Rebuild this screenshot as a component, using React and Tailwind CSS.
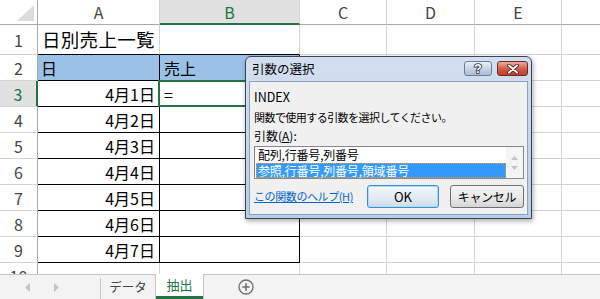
import React from "react";

const rows = [
  { n: 1, a: "日別売上一覧", title: true },
  { n: 2, a: "日", b: "売上", head: true },
  { n: 3, a: "4月1日", b: "=", sel: true },
  { n: 4, a: "4月2日" },
  { n: 5, a: "4月3日" },
  { n: 6, a: "4月4日" },
  { n: 7, a: "4月5日" },
  { n: 8, a: "4月6日" },
  { n: 9, a: "4月7日" },
  { n: 10 },
];

function RowHeader({ n, sel }) {
  return (
    <div
      className={
        sel
          ? "w-[38px] shrink-0 border-b border-b-[#d4d4d4] border-r-2 border-r-[#217346] bg-[#e1e1e1] text-[#217346] flex items-center justify-center text-[16px]"
          : "w-[38px] shrink-0 border-b border-b-[#d4d4d4] border-r border-r-[#ababab] text-[#444] flex items-center justify-center text-[16px]"
      }
    >
      {n}
    </div>
  );
}

function Row({ r }) {
  const inTable = r.n >= 2 && r.n <= 9;
  const h = r.title ? "h-[30px]" : "h-[26px]";
  let aCls = "w-[122px] shrink-0 border-r border-b flex items-center ";
  let bCls = "w-[140px] shrink-0 border-r border-b flex items-center relative ";
  if (r.n === 1) {
    aCls += "border-r-[#d4d4d4] border-b-black pl-[4px] text-[18.5px] tracking-[0.3px]";
    bCls += "border-r-[#d4d4d4] border-b-black";
  } else if (inTable) {
    aCls += "border-r-black border-b-black text-[16px] ";
    bCls += "border-r-black border-b-black text-[16px] pl-[4px] ";
    if (r.head) {
      aCls += "bg-[#9bc2e6] pl-[3px]";
      bCls += "bg-[#9bc2e6]";
    } else {
      aCls += "justify-end pr-[4px]";
    }
  } else {
    aCls += "border-r-[#d4d4d4] border-b-[#d4d4d4]";
    bCls += "border-r-[#d4d4d4] border-b-[#d4d4d4]";
  }
  return (
    <div className={"flex shrink-0 " + h}>
      <RowHeader n={r.n} sel={r.sel} />
      <div className={aCls}>{r.a}</div>
      <div className={bCls}>
        {r.b}
        {r.sel && (
          <div className="absolute -left-[2px] -top-[1px] w-[141px] h-[27px] border-2 border-[#217346]" />
        )}
      </div>
      <div className="w-[87px] shrink-0 border-r border-b border-[#d4d4d4]" />
      <div className="w-[88px] shrink-0 border-r border-b border-[#d4d4d4]" />
      <div className="w-[87px] shrink-0 border-r border-b border-[#d4d4d4]" />
      <div className="flex-1 border-b border-[#d4d4d4]" />
    </div>
  );
}

function Dialog() {
  return (
    <div className="absolute left-[245px] top-[56px] w-[287px] h-[163px] rounded-t-[6px] border border-[#3a4656] bg-gradient-to-b from-[#d3dff0] to-[#b8cde6] flex flex-col px-[3px] pb-[3px] shadow-[1px_2px_5px_rgba(0,0,0,0.35)]">
      <div className="h-[24px] shrink-0 flex items-start justify-between">
        <div className="pl-[3px] pt-[4px] text-[12.5px] leading-[16px] text-black">引数の選択</div>
        <div className="flex gap-[5px] pt-[4px]">
          <div className="w-[28px] h-[15px] rounded-[3px] border border-[#6f7e92] bg-gradient-to-b from-[#e8eef6] to-[#a9bcd4] flex items-center justify-center">
            <svg width="12" height="13" viewBox="0 0 12 13">
              <text x="6" y="11" textAnchor="middle" fontSize="13" fontWeight="700" fontFamily="Liberation Sans, sans-serif" fill="#fff" stroke="#2a3340" strokeWidth="1.6" paintOrder="stroke">?</text>
            </svg>
          </div>
          <div className="w-[31px] h-[15px] rounded-[3px] border border-[#6b2a24] bg-gradient-to-b from-[#eab0a3] via-[#d45c48] to-[#c0402c] flex items-center justify-center">
            <svg width="14" height="10" viewBox="0 0 14 10">
              <path d="M3 1.5 L11 8.5 M11 1.5 L3 8.5" stroke="#3a1a16" strokeWidth="3.6" strokeLinecap="round" />
              <path d="M3 1.5 L11 8.5 M11 1.5 L3 8.5" stroke="#fff" strokeWidth="2" strokeLinecap="round" />
            </svg>
          </div>
        </div>
      </div>
      <div className="flex-1 bg-[#f0f0f0] border border-[#8ea2bb] pl-[4px] pr-[3px] pt-[7px] flex flex-col text-black">
        <div className="h-[16px] leading-[16px] text-[12.5px]">INDEX</div>
        <div className="mt-[4px] h-[16px] leading-[16px] text-[11px] tracking-[-0.55px] whitespace-nowrap">関数で使用する引数を選択してください。</div>
        <div className="mt-[3px] h-[16px] leading-[16px] text-[12px]">
          引数(<span className="underline">A</span>):
        </div>
        <div className="mt-[2px] h-[33px] border border-[#828790] bg-white flex">
          <div className="flex-1 flex flex-col pt-[0px] pl-[1px]">
            <div className="h-[16px] leading-[16px] text-[12px] pl-[2px] tracking-[-0.2px] whitespace-nowrap">配列,行番号,列番号</div>
            <div className="h-[15px] leading-[14px] text-[12px] pl-[1px] tracking-[-0.2px] bg-[#3399ff] text-white border border-dotted border-[#f59a3a] whitespace-nowrap">参照,行番号,列番号,領域番号</div>
          </div>
          <div className="w-[17px] shrink-0 bg-[#f4f4f4] flex flex-col items-center justify-center gap-[6px]">
            <svg width="7" height="4" viewBox="0 0 7 4"><path d="M0 4 L3.5 0 L7 4 Z" fill="#c2c2c2" /></svg>
            <svg width="7" height="4" viewBox="0 0 7 4"><path d="M0 0 L3.5 4 L7 0 Z" fill="#c2c2c2" /></svg>
          </div>
        </div>
        <div className="mt-[6px] h-[23px] flex items-center">
          <div className="text-[11px] tracking-[-0.4px] text-[#0066cc] underline whitespace-nowrap">この関数のヘルプ(H)</div>
          <div className="flex-1" />
          <div className="w-[72px] h-[23px] rounded-[3px] border border-[#3c8fd4] bg-gradient-to-b from-[#f2f7fb] via-[#e3ecf3] to-[#cfdde8] shadow-[inset_0_0_0_1px_#a8dcfa] flex items-center justify-center text-[13px]">
            OK
          </div>
          <div className="ml-[11px] w-[74px] h-[23px] rounded-[3px] border border-[#707070] bg-gradient-to-b from-[#f2f2f2] via-[#ebebeb] to-[#d5d5d5] flex items-center justify-center text-[12px] tracking-[-0.3px]">
            キャンセル
          </div>
        </div>
      </div>
    </div>
  );
}

function TabBar() {
  return (
    <div className="h-[25px] shrink-0 border-t border-[#c6c6c6] bg-[#f3f3f3] flex text-[13px]">
      <div className="w-[100px] shrink-0 relative">
        <svg className="absolute left-[25px] top-[8px]" width="6" height="9" viewBox="0 0 6 9"><path d="M5 0 L0 4.5 L5 9 Z" fill="#c3c3c3" /></svg>
        <svg className="absolute left-[54px] top-[8px]" width="6" height="9" viewBox="0 0 6 9"><path d="M0 0 L5 4.5 L0 9 Z" fill="#c3c3c3" /></svg>
      </div>
      <div className="w-[55px] shrink-0 flex flex-col">
        <div className="flex-1 flex items-center justify-center border-l border-[#c6c6c6] mt-[3px] text-[#444] text-[12.5px] pb-[3px]">データ</div>
      </div>
      <div className="w-[49px] shrink-0 bg-white border-x border-[#c6c6c6] flex flex-col -mt-px">
        <div className="flex-1 flex items-center justify-center text-[#217346] text-[13px]">抽出</div>
        <div className="h-[3px] bg-[#217346]" />
      </div>
      <div className="flex-1 relative">
        <svg className="absolute left-[34px] top-[4px]" width="16" height="16" viewBox="0 0 16 16">
          <circle cx="8" cy="8" r="7" fill="none" stroke="#6f6f6f" strokeWidth="1.3" />
          <path d="M8 4.3 V11.7 M4.3 8 H11.7" stroke="#6f6f6f" strokeWidth="1.6" />
        </svg>
      </div>
    </div>
  );
}

export default function App() {
  return (
    <div className="w-[600px] h-[299px] relative overflow-hidden bg-white flex flex-col font-['Noto_Sans_CJK_JP','Noto_Sans',sans-serif] text-black">
      <div className="h-[274px] overflow-hidden flex flex-col">
        <div className="flex h-[25px] shrink-0 text-[16px] text-[#444]">
          <div className="w-[38px] shrink-0 border-r border-b border-[#ababab] relative">
            <svg className="absolute right-[3px] bottom-[3px]" width="17" height="16" viewBox="0 0 17 16">
              <path d="M17 0 L17 16 L0 16 Z" fill="#dcdcdc" />
            </svg>
          </div>
          <div className="w-[122px] shrink-0 border-r border-r-[#d4d4d4] border-b border-b-[#ababab] flex items-center justify-center">A</div>
          <div className="w-[140px] shrink-0 border-r border-r-[#d4d4d4] border-b-2 border-b-[#217346] bg-[#e1e1e1] text-[#217346] flex items-center justify-center">B</div>
          <div className="w-[87px] shrink-0 border-r border-r-[#d4d4d4] border-b border-b-[#ababab] flex items-center justify-center">C</div>
          <div className="w-[88px] shrink-0 border-r border-r-[#d4d4d4] border-b border-b-[#ababab] flex items-center justify-center">D</div>
          <div className="w-[87px] shrink-0 border-r border-r-[#d4d4d4] border-b border-b-[#ababab] flex items-center justify-center">E</div>
          <div className="flex-1 border-b border-b-[#ababab]" />
        </div>
        {rows.map((r) => (
          <Row key={r.n} r={r} />
        ))}
      </div>
      <TabBar />
      <Dialog />
    </div>
  );
}
